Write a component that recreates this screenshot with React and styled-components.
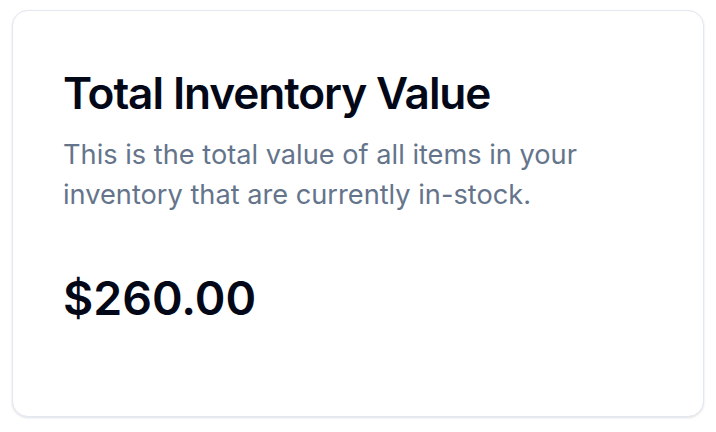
import React from "react";
import styled, { createGlobalStyle } from "styled-components";

const Global = createGlobalStyle`
  html, body { margin: 0; padding: 0; background: #ffffff; }
  body { font-family: Inter, "Noto Sans", sans-serif; -webkit-font-smoothing: antialiased; }
  * { box-sizing: border-box; }
`;

const Page = styled.div`
  padding: 10px 12px;
`;

const Card = styled.section`
  width: 692px;
  height: 407px;
  border: 1.5px solid #e2e8f0;
  border-radius: 16px;
  background: #ffffff;
  box-shadow: 0 1px 3px rgba(15, 23, 42, 0.08), 0 1px 2px rgba(15, 23, 42, 0.05);
  display: flex;
  flex-direction: column;
`;

const Header = styled.header`
  display: flex;
  flex-direction: column;
  gap: 20px;
  padding: 60px 50px 0 50px;
`;

const Title = styled.h2`
  margin: 0;
  font-size: 44.2px;
  line-height: 1;
  font-weight: 600;
  letter-spacing: -0.025em;
  color: #020817;
`;

const Description = styled.p`
  margin: 0;
  font-size: 27.2px;
  line-height: 40px;
  color: #64748b;
`;

const Content = styled.div`
  padding: 60px 50px 0 50px;
`;

const Value = styled.div`
  font-size: 46.5px;
  line-height: 1;
  font-weight: 600;
  color: #020817;
`;

export default function App() {
  return (
    <>
      <Global />
      <Page>
        <Card>
          <Header>
            <Title>Total Inventory Value</Title>
            <Description>
              This is the total value of all items in your
              <br />
              inventory that are currently in-stock.
            </Description>
          </Header>
          <Content>
            <Value>$260.00</Value>
          </Content>
        </Card>
      </Page>
    </>
  );
}
